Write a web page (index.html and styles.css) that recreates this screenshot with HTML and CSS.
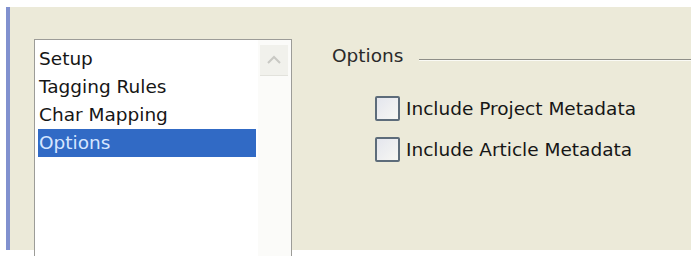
FILE: index.html
```html
<!DOCTYPE html>
<html>
<head>
<meta charset="utf-8">
<link rel="stylesheet" href="styles.css">
</head>
<body>
<div class="frame">
  <div class="listbox">
    <ul class="items">
      <li class="item">Setup</li>
      <li class="item">Tagging Rules</li>
      <li class="item">Char Mapping</li>
      <li class="item selected">Options</li>
    </ul>
    <div class="scrollbar">
      <div class="scroll-btn">
        <svg width="16" height="10" viewBox="0 0 16 10"><path d="M2 8 L8 2 L14 8" fill="none" stroke="#c9c9c4" stroke-width="2"/></svg>
      </div>
    </div>
  </div>
  <div class="panel">
    <div class="group-head">
      <span class="group-label">Options</span>
      <span class="group-line"></span>
    </div>
    <div class="checks">
      <label class="check"><span class="box"></span><span class="check-text">Include Project Metadata</span></label>
      <label class="check"><span class="box"></span><span class="check-text">Include Article Metadata</span></label>
    </div>
  </div>
</div>
</body>
</html>
```
FILE: styles.css
```css
html, body {
  margin: 0;
  padding: 0;
  background: #ffffff;
  overflow: hidden;
  width: 696px;
  height: 256px;
}
body {
  font-family: "DejaVu Sans", "Noto Sans", sans-serif;
  font-size: 18.5px;
  color: #161616;
}
.frame {
  margin: 7px 5px 0 6px;
  height: 243px;
  background: #ecead9;
  border-left: 4px solid #8191cf;
  display: flex;
  align-items: flex-start;
}
.listbox {
  margin: 32px 0 0 24px;
  width: 256px;
  height: 217px;
  border: 1px solid #9c9c98;
  border-bottom: none;
  background: #ffffff;
  display: flex;
  flex-shrink: 0;
}
.items {
  list-style: none;
  margin: 0;
  padding: 5px 0 0 3px;
  width: 218px;
}
.item {
  height: 28px;
  line-height: 28px;
  padding-left: 1px;
  white-space: nowrap;
}
.item.selected {
  background: #316ac5;
  color: #d6e6ff;
}
.scrollbar {
  margin-left: 2px;
  width: 33px;
  padding-top: 5px;
  background: #fbfbf9;
}
.scroll-btn {
  width: 28px;
  height: 30px;
  margin-left: 2px;
  background: #f1f1ec;
  border-bottom: 1px solid #e2e2dc;
  display: flex;
  align-items: center;
  justify-content: center;
}
.panel {
  flex: 1;
  padding: 38px 0 0 40px;
}
.group-head {
  display: flex;
  align-items: flex-end;
  height: 22px;
}
.group-label {
  color: #2a2a2a;
  line-height: 22px;
}
.group-line {
  flex: 1;
  margin-left: 16px;
  margin-bottom: 6px;
  border-top: 1px solid #8e8e88;
  border-bottom: 1px solid #fafaf5;
}
.checks {
  padding: 29px 0 0 43px;
  display: flex;
  flex-direction: column;
  gap: 16px;
}
.check {
  display: flex;
  align-items: center;
  height: 25px;
}
.box {
  width: 21px;
  height: 21px;
  border: 2px solid #5d6c7a;
  border-radius: 2px;
  background: linear-gradient(135deg, #e4e6ee, #f7f7f3);
  flex-shrink: 0;
}
.check-text {
  margin-left: 6px;
  white-space: nowrap;
}
```
